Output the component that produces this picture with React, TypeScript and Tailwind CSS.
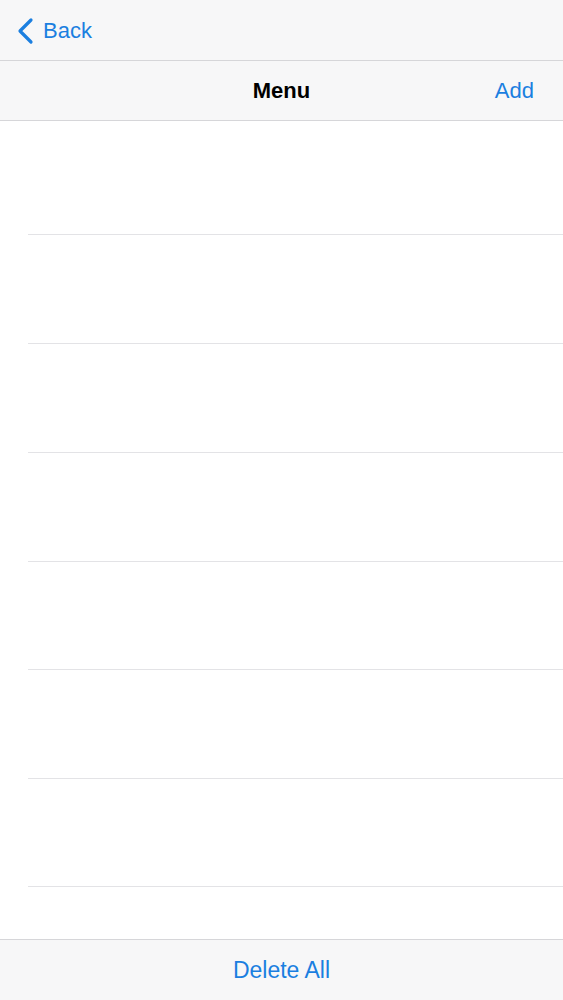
export default function App() {
  const rows = [114, 109, 109, 109, 108, 109, 108];

  return (
    <div
      className="flex h-[1000px] w-full flex-col bg-white text-black"
      style={{ fontFamily: '"Liberation Sans", Arial, sans-serif' }}
    >
      {/* top bar */}
      <div className="flex h-[61px] shrink-0 items-center border-b border-[#d6d6d9] bg-[#f7f7f8] pl-[16px]">
        <svg width="18" height="28" viewBox="0 0 18 28" className="mt-[2px]">
          <path d="M15 3 L4 14 L15 25" fill="none" stroke="#1b7fe0" strokeWidth="3.2" strokeLinecap="round" strokeLinejoin="round" />
        </svg>
        <span className="ml-[9px] mt-[1px] text-[22px] leading-none text-[#1b7fe0]">Back</span>
      </div>

      {/* nav bar */}
      <div className="relative flex h-[60px] shrink-0 items-center justify-center border-b border-[#d6d6d9] bg-[#f7f7f8]">
        <span className="text-[22px] font-bold leading-none">Menu</span>
        <span className="absolute right-[29px] text-[22px] leading-none text-[#1b7fe0]">Add</span>
      </div>

      {/* list */}
      <div className="flex flex-1 flex-col">
        {rows.map((h, i) => (
          <div key={i} className="flex flex-col" style={{ height: h }}>
            <div className="flex-1" />
            <div className="ml-[28px] h-px bg-[#e3e3e6]" />
          </div>
        ))}
      </div>

      {/* bottom toolbar */}
      <div className="flex h-[61px] shrink-0 items-center justify-center border-t border-[#d6d6d9] bg-[#f7f7f8]">
        <span className="text-[23px] leading-none text-[#1b7fe0]">Delete All</span>
      </div>
    </div>
  );
}
